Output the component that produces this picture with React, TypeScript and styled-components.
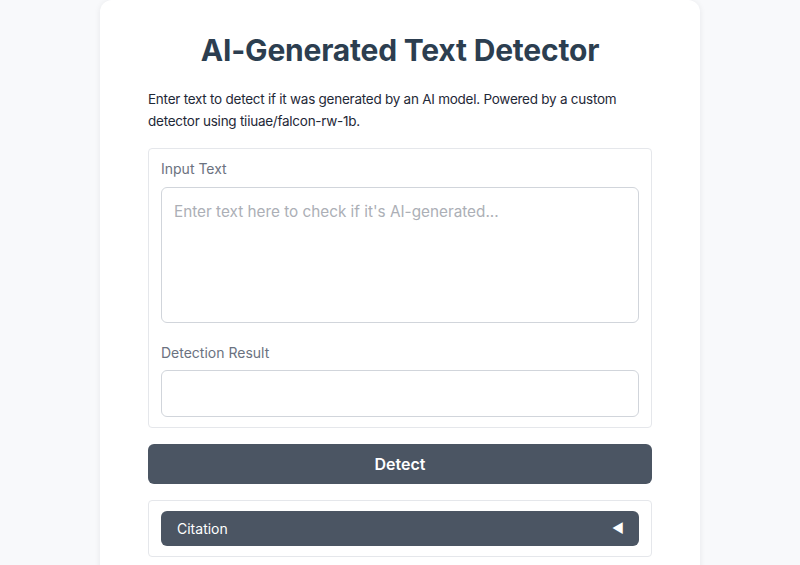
import React from 'react';
import styled, { createGlobalStyle } from 'styled-components';

const GlobalStyle = createGlobalStyle`
  html, body {
    margin: 0;
    padding: 0;
    background: #f8f9fb;
    font-family: Inter, "Noto Sans", "Liberation Sans", sans-serif;
  }
  * { box-sizing: border-box; }
`;

const Card = styled.main`
  width: 600px;
  margin: 0 auto;
  min-height: 600px;
  background: #ffffff;
  border-radius: 12px;
  box-shadow: 0 1px 6px rgba(15, 23, 42, 0.08);
  padding: 32px 48px 24px;
  display: flex;
  flex-direction: column;
`;

const Title = styled.h1`
  margin: 0 0 20px;
  font-size: 30px;
  line-height: 36px;
  font-weight: 700;
  text-align: center;
  color: #2c3e50;
  letter-spacing: -0.2px;
`;

const Description = styled.p`
  margin: 0 0 16px;
  font-size: 13.5px;
  line-height: 22px;
  letter-spacing: -0.25px;
  color: #1f2937;
`;

const Group = styled.section`
  border: 1px solid #e5e7eb;
  border-radius: 4px;
  padding: 10px 12px;
  display: flex;
  flex-direction: column;
`;

const Field = styled.label<{ $spaced?: boolean }>`
  display: flex;
  flex-direction: column;
  gap: 8px;
  margin-top: ${p => (p.$spaced ? '20px' : '0')};
`;

const FieldLabel = styled.span`
  font-size: 14px;
  line-height: 20px;
  color: #6b7280;
`;

const TextArea = styled.textarea`
  height: 136px;
  resize: none;
  border: 1px solid #d1d5db;
  border-radius: 6px;
  padding: 12px;
  font-family: inherit;
  font-size: 15.3px;
  line-height: 24px;
  color: #1f2937;
  outline: none;
  &::placeholder { color: #acafb6; }
`;

const Output = styled.input`
  height: 47px;
  border: 1px solid #d1d5db;
  border-radius: 6px;
  padding: 0 12px;
  font-family: inherit;
  font-size: 16px;
  color: #1f2937;
  outline: none;
  margin-top: -1px;
`;

const DetectButton = styled.button`
  margin-top: 16px;
  height: 40px;
  border: none;
  border-radius: 6px;
  background: #4b5563;
  color: #ffffff;
  font-family: inherit;
  font-size: 16px;
  font-weight: 600;
  cursor: pointer;
`;

const Accordion = styled(Group)`
  margin-top: 16px;
`;

const AccordionHeader = styled.button`
  height: 35px;
  border: none;
  border-radius: 6px;
  background: #4b5563;
  color: #ffffff;
  font-family: inherit;
  font-size: 14px;
  padding: 0 15px 0 16px;
  display: flex;
  align-items: center;
  justify-content: space-between;
  cursor: pointer;
`;

const Caret = styled.span`
  font-size: 13px;
  line-height: 1;
`;

export default function App() {
  return (
    <>
      <GlobalStyle />
      <Card>
        <Title>AI-Generated Text Detector</Title>
        <Description>
          Enter text to detect if it was generated by an AI model. Powered by a custom detector
          using tiiuae/falcon-rw-1b.
        </Description>
        <Group>
          <Field>
            <FieldLabel>Input Text</FieldLabel>
            <TextArea placeholder="Enter text here to check if it's AI-generated..." />
          </Field>
          <Field $spaced>
            <FieldLabel>Detection Result</FieldLabel>
            <Output readOnly />
          </Field>
        </Group>
        <DetectButton>Detect</DetectButton>
        <Accordion>
          <AccordionHeader>
            <span>Citation</span>
            <Caret>◀</Caret>
          </AccordionHeader>
        </Accordion>
      </Card>
    </>
  );
}
